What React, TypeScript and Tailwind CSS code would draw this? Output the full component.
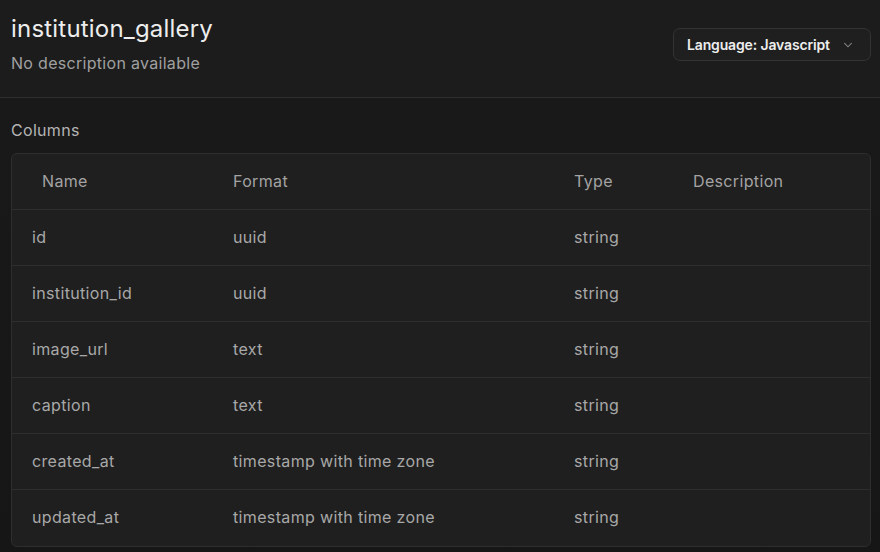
import React from "react";

const rows = [
  ["id", "uuid", "string"],
  ["institution_id", "uuid", "string"],
  ["image_url", "text", "string"],
  ["caption", "text", "string"],
  ["created_at", "timestamp with time zone", "string"],
  ["updated_at", "timestamp with time zone", "string"],
];

export default function App() {
  return (
    <div
      className="w-[880px] h-[552px] overflow-hidden bg-[#171717] flex flex-col"
      style={{ fontFamily: "Inter, 'Noto Sans', sans-serif" }}
    >
      <div className="h-[98px] shrink-0 bg-[#1c1c1c] border-b border-[#2e2e2e] flex items-start justify-between pl-[11px] pr-[9px] pt-[13px]">
        <div className="flex flex-col">
          <h1 className="text-[24px] leading-[32px] text-[#ededed] font-normal tracking-[0.2px]">
            institution_gallery
          </h1>
          <p className="mt-[7px] text-[16px] leading-[22px] text-[#a0a0a0] tracking-[0.3px]">No description available</p>
        </div>
        <button className="mt-[15px] h-[33px] w-[198px] rounded-[7px] border border-[#333333] bg-[#1f1f1f] flex items-center pl-[13px] pr-[15px] justify-between">
          <span className="text-[14px] font-semibold text-[#ededed] tracking-[-0.15px]">Language: Javascript</span>
          <svg width="14" height="14" viewBox="0 0 24 24" fill="none" stroke="#8f8f8f" strokeWidth="1.8" strokeLinecap="round" strokeLinejoin="round">
            <path d="M6 9l6 6 6-6" />
          </svg>
        </button>
      </div>
      <div className="flex-1 bg-gradient-to-b from-[#191919] to-[#161616] pl-[11px] pr-[9px] pt-[20px]">
        <div className="text-[16px] leading-[24px] text-[#b4b4b4] mb-[11px] tracking-[0.3px]">Columns</div>
        <div className="rounded-[6px] border border-[#2e2e2e] bg-[#1f1f1f] overflow-hidden tracking-[0.35px]">
          <div className="grid grid-cols-[201px_341px_119px_1fr] h-[56px] items-center border-b border-[#2e2e2e] text-[16px] leading-[22px] pb-[2px] text-[#a3a3a3]">
            <div className="pl-[30px]">Name</div>
            <div className="pl-[20px]">Format</div>
            <div className="pl-[20px]">Type</div>
            <div className="pl-[20px]">Description</div>
          </div>
          {rows.map((r, i) => (
            <div
              key={r[0]}
              className={
                "grid grid-cols-[201px_341px_119px_1fr] h-[56px] items-center text-[16px] leading-[22px] pb-[2px] text-[#a8a8a8] " +
                (i < rows.length - 1 ? "border-b border-[#2e2e2e]" : "")
              }
            >
              <div className="pl-[20px]">{r[0]}</div>
              <div className="pl-[20px]">{r[1]}</div>
              <div className="pl-[20px]">{r[2]}</div>
              <div className="pl-[20px]"></div>
            </div>
          ))}
        </div>
      </div>
    </div>
  );
}
